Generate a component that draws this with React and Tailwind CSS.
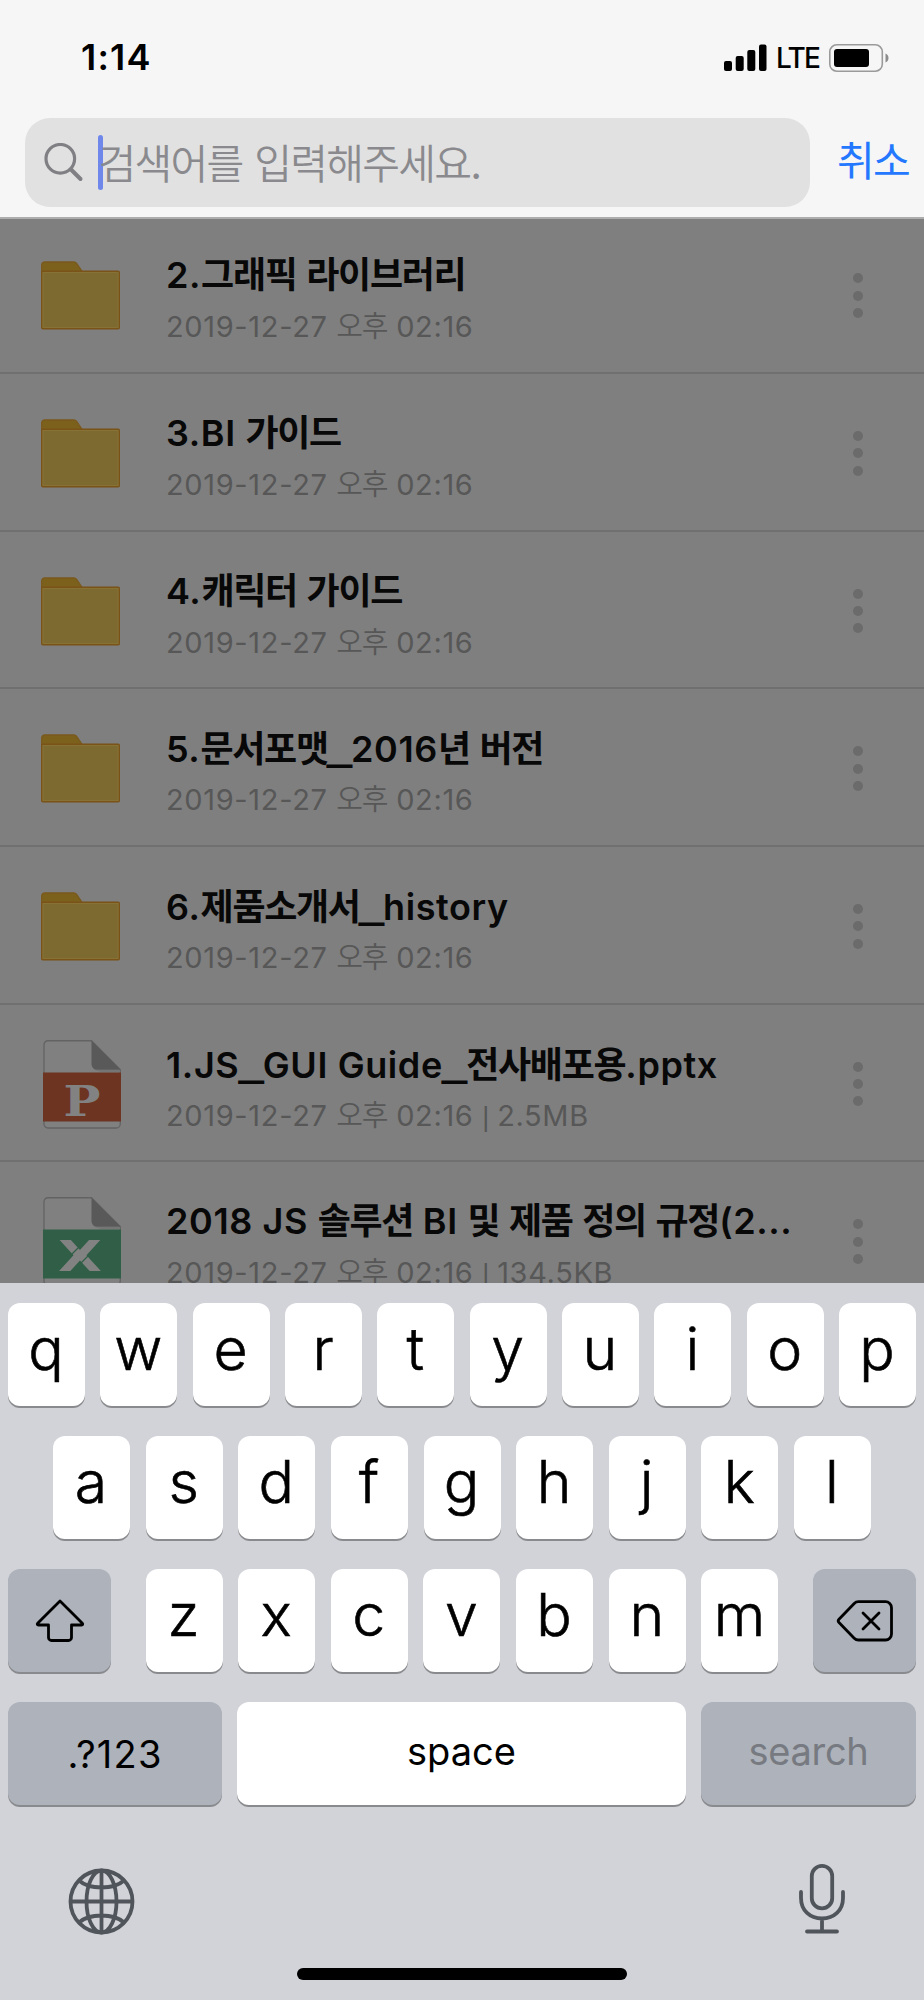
const FONT = "font-['Inter','Noto_Sans_CJK_KR',sans-serif]";

const files = [
  { type: 'folder', name: '2.그래픽 라이브러리', date: '2019-12-27 오후 02:16' },
  { type: 'folder', name: '3.BI 가이드', date: '2019-12-27 오후 02:16' },
  { type: 'folder', name: '4.캐릭터 가이드', date: '2019-12-27 오후 02:16' },
  { type: 'folder', name: '5.문서포맷_2016년 버전', date: '2019-12-27 오후 02:16' },
  { type: 'folder', name: '6.제품소개서_history', date: '2019-12-27 오후 02:16' },
  { type: 'pptx', name: '1.JS_GUI Guide_전사배포용.pptx', date: '2019-12-27 오후 02:16 | 2.5MB' },
  { type: 'xlsx', name: '2018 JS 솔루션 BI 및 제품 정의 규정(2...', date: '2019-12-27 오후 02:16 | 134.5KB' },
];

// Hangul is set a little tighter than the latin text around it
function Mixed({ text, tight }) {
  return text.split(/([가-힣]+|_|\|)/).map((part, i) => {
    if (i % 2 === 0) return part;
    if (part === '_') {
      return <span key={i} className="font-['Liberation_Sans',sans-serif] text-[42px] font-bold tracking-normal [-webkit-text-stroke:2px_#080808]">_</span>;
    }
    if (part === '|') {
      return <span key={i} className="font-['Liberation_Sans',sans-serif] text-[27px] tracking-[-1px]">|</span>;
    }
    return <span key={i} className={tight}>{part}</span>;
  });
}

function FolderIcon() {
  return (
    <svg width="79" height="69" viewBox="0 0 79 69" fill="none">
      <path d="M.75 11V4a3 3 0 0 1 3-3H33a3 3 0 0 1 2.4 1.2L41 10.5" fill="#7c611c" stroke="#7a5a1e" strokeWidth="1.5" />
      <rect x=".75" y="10.25" width="77.5" height="57.5" rx="1" fill="#7d6a31" stroke="#795318" strokeWidth="1.5" />
      <rect x="2" y="11.5" width="75" height="55" stroke="#877135" />
    </svg>
  );
}

function DocIcon({ type }) {
  const ppt = type === 'pptx';
  return (
    <svg width="78" height="89" viewBox="0 0 78 89" fill="none">
      <path d="M5 .75H48.5L77.25 29.5V84a4 4 0 0 1-4 4H5a4 4 0 0 1-4-4V5a4 4 0 0 1 4-4.25Z" fill="#808080" stroke="#636363" strokeWidth="1.3" />
      <path d="M52 30H77V32H58Z" fill="#757575" />
      <path d="M48.5 .75L77.5 29.8H54a5.5 5.5 0 0 1-5.5-5.5Z" fill="#595959" />
      <rect y="32.5" width="78" height="49" fill={ppt ? '#6d3421' : '#305e46'} />
      {ppt ? (
        <text x="20.5" y="76" fontSize="42" fontWeight="700" textLength="37" lengthAdjust="spacingAndGlyphs" fill="#828282" className="font-['DejaVu_Serif',serif]">P</text>
      ) : (
        <>
          <text x="15" y="74" fontSize="42" fontWeight="700" textLength="44" lengthAdjust="spacingAndGlyphs" fill="#828282" className="font-['DejaVu_Sans',sans-serif]">X</text>
          <path d="M27.500 58.500L37 49M37.500 66.500L47 57" stroke="#305e46" strokeWidth="1.3" />
        </>
      )}
    </svg>
  );
}

function FileRow({ file }) {
  return (
    <div className="flex h-[157.7px] shrink-0 items-center border-b-2 border-[#707070] pl-[41px] pr-[61px] pt-[3px]">
      <div className="flex w-[125px] shrink-0">
        {file.type === 'folder' ? <FolderIcon /> : <div className="pl-0.5"><DocIcon type={file.type} /></div>}
      </div>
      <div className="flex-1 whitespace-nowrap pt-[9px]">
        <div className="h-[50px] text-[36px] font-semibold leading-[50px] tracking-[0.6px] text-[#080808]">
          <Mixed text={file.name} tight="tracking-[-1.3px]" />
        </div>
        <div className="h-[50px] pt-[2px] text-[29px] leading-[50px] tracking-[0.65px] text-[#575757]">
          <Mixed text={file.date} tight="tracking-[-1.2px] font-[350]" />
        </div>
      </div>
      <div className="flex flex-col gap-[7.3px]">
        <i className="size-2.5 rounded-full bg-[#6b6b6b]" />
        <i className="size-2.5 rounded-full bg-[#6b6b6b]" />
        <i className="size-2.5 rounded-full bg-[#6b6b6b]" />
      </div>
    </div>
  );
}

function Key({ children, className = 'w-[77px] bg-white text-[59px] font-light [-webkit-text-stroke:0.6px_#000] leading-[91px] pr-px' }) {
  return (
    <div className={`flex h-[103px] shrink-0 justify-center rounded-xl shadow-[0_2px_0_#898a8d] ${className}`}>
      {children}
    </div>
  );
}

function StatusBar() {
  return (
    <div className="flex h-[118px] items-start justify-between pl-[81px] pr-[34px]">
      <div className="pt-[32px] text-[36px] font-semibold leading-[50px] tracking-[1.2px]">1:14</div>
      <div className="flex items-center pt-[43px]">
        <svg width="43" height="28" viewBox="0 0 43 28">
          <rect x="0" y="17" width="8" height="10" rx="2" />
          <rect x="11.7" y="12" width="8" height="15" rx="2" />
          <rect x="23.3" y="6" width="8" height="21" rx="2" />
          <rect x="35" y="0.5" width="7.5" height="26.5" rx="2" />
        </svg>
        <span className="w-[62px] pl-[9px] pt-px text-[28px] font-medium leading-[28px] tracking-[-1.7px]">LTE</span>
        <svg width="61" height="28" viewBox="0 0 61 28" fill="none">
          <rect x="0.8" y="0.8" width="52.5" height="26.4" rx="7" stroke="#9a9a9a" strokeWidth="1.6" />
          <rect x="5" y="5" width="35" height="18" rx="3" fill="#000" />
          <path d="M56.5 9.5c2 .7 3 2.4 3 4.5s-1 3.8-3 4.5Z" fill="#8c8c8c" />
        </svg>
      </div>
    </div>
  );
}

function SearchBar() {
  return (
    <div className="flex h-[99px] items-start pl-[25px]">
      <div className="flex h-[89px] w-[785px] items-center rounded-[25px] bg-[#e1e1e1] pl-[19px]">
        <svg width="40" height="40" viewBox="0 0 40 40" fill="none" stroke="#808084" strokeWidth="3.2" strokeLinecap="round">
          <circle cx="16.3" cy="15.8" r="14.3" />
          <path d="M27 26.5L36.5 36" strokeWidth="4" />
        </svg>
        <div className="ml-[14px] h-[55px] w-[4.5px] rounded-sm bg-[#6f87ea]" />
        <div className="-ml-[4px] whitespace-nowrap pt-0.5 text-[41px] leading-[60px] text-[#8a8a8e]">
          <Mixed text="검색어를 입력해주세요." tight="tracking-[-1.7px] font-[350]" />
        </div>
      </div>
      <div className="pl-[27px] pt-[13px] text-[41px] leading-[60px] tracking-[-1.7px] text-[#2478ff]">취소</div>
    </div>
  );
}

function Keyboard() {
  return (
    <div className="flex h-[717px] flex-col gap-[30px] bg-[#d2d3d8] px-2 pt-5 text-black">
      <div className="flex justify-between">
        {'qwertyuiop'.split('').map((c) => <Key key={c}>{c}</Key>)}
      </div>
      <div className="flex justify-between px-[45px]">
        {'asdfghjkl'.split('').map((c) => <Key key={c}>{c}</Key>)}
      </div>
      <div className="flex justify-between">
        <Key className="w-[103px] items-center bg-[#adb2bb]">
          <svg width="50" height="44" viewBox="0 0 50 44" fill="none" stroke="#000" strokeWidth="2.8" strokeLinejoin="round">
            <path d="M25 2L47.3 24.2c.9 1 .4 1.8-.7 1.8H36.500V38.500a3 3 0 0 1-3 3h-17a3 3 0 0 1-3-3V26H3.400c-1.100 0-1.600-.8-.7-1.800Z" />
          </svg>
        </Key>
        <div className="flex w-[633px] justify-between">
          {'zxcvbnm'.split('').map((c) => <Key key={c}>{c}</Key>)}
        </div>
        <Key className="w-[103px] items-center bg-[#adb2bb]">
          <svg width="58" height="42" viewBox="0 0 58 42" fill="none" stroke="#000" strokeWidth="2.8" strokeLinejoin="round" strokeLinecap="round">
            <path d="M22.500 1.700H49.500a6 6 0 0 1 6 6V34a6 6 0 0 1-6 6H22.500a6 6 0 0 1-4.300-1.800L3 22.500a2.300 2.300 0 0 1 0-3.200L18.200 3.500a6 6 0 0 1 4.300-1.800Z" />
            <path d="M27 13L43 29M43 13L27 29" />
          </svg>
        </Key>
      </div>
      <div className="flex justify-between">
        <Key className="w-[214px] bg-[#adb2bb] text-[38px] leading-[105px] tracking-[1.2px]">.?123</Key>
        <Key className="w-[449px] bg-white text-[38px] leading-[98px]">space</Key>
        <Key className="w-[215px] bg-[#adb2bb] text-[38px] leading-[98px] tracking-[-0.3px] text-[#777a80]">search</Key>
      </div>
      <div className="flex flex-1 flex-col items-center justify-between pb-5">
        <div className="flex w-full justify-between pl-[60px] pr-[71px] pt-[29px]">
          <svg className="mt-1" width="67" height="67" viewBox="0 0 67 67" fill="none" stroke="#50555b" strokeWidth="3.8">
            <circle cx="33.500" cy="33.500" r="31" />
            <ellipse cx="33.500" cy="33.500" rx="15" ry="31" />
            <path d="M33.500 2V65M2 33.500H65M11 12.500c5 4.500 13 7 22.500 7S51 17 56 12.500M11 54.500c5-4.500 13-7 22.500-7S51 50 56 54.500" />
          </svg>
          <svg width="46" height="71" viewBox="0 0 46 71" fill="none" stroke="#50555b" strokeWidth="3.800" strokeLinecap="round">
            <rect x="12.800" y="1.900" width="20.400" height="42.500" rx="10.200" />
            <path d="M2 28V34C2 46.500 11 54.500 23 54.500S44 46.500 44 34V28M23 54.500V67M8 67.500H38" />
          </svg>
        </div>
        <div className="h-3 w-[330px] rounded-full bg-black" />
      </div>
    </div>
  );
}

export default function App() {
  return (
    <div className={`flex h-[2000px] w-[924px] flex-col overflow-hidden bg-[#7f7f7f] text-black ${FONT}`}>
      <div className="shrink-0 border-b-2 border-[#adadad] bg-[#f6f6f6]">
        <StatusBar />
        <SearchBar />
      </div>
      <div className="flex h-[1064px] shrink-0 flex-col overflow-hidden">
        <div className="-mt-[2.7px]">
          {files.map((file) => <FileRow key={file.name} file={file} />)}
        </div>
      </div>
      <Keyboard />
    </div>
  );
}
